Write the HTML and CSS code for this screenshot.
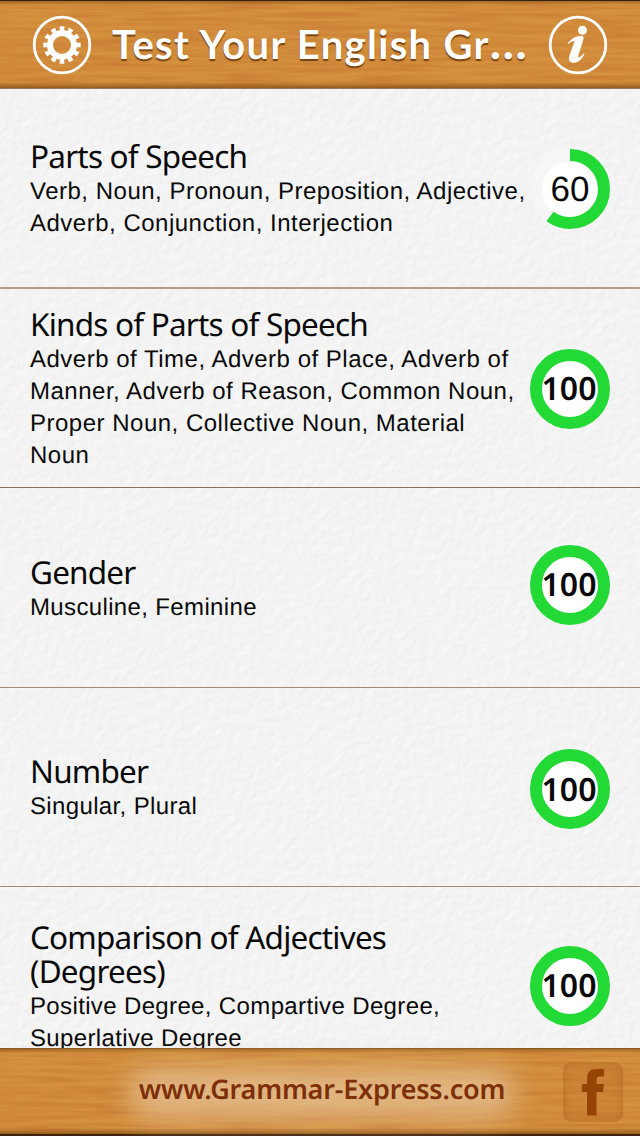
FILE: index.html
```html
<!DOCTYPE html>
<html lang="en">
<head>
    <meta charset="UTF-8">
    <meta name="viewport" content="width=device-width, initial-scale=1.0">
    <title>Test Your English Grammar</title>
    <link rel="stylesheet" href="styles.css">
</head>
<body>
    <header class="bar top-bar">
        <svg class="round-icon" viewBox="0 0 60 60">
            <circle cx="30" cy="30" r="27.8" fill="none" stroke="#fff" stroke-width="2.8"/>
            <circle cx="30" cy="30" r="12" fill="none" stroke="#fff" stroke-width="6"/>
            <!-- twelve teeth -->
            <circle cx="30" cy="30" r="16.3" fill="none" stroke="#fff" stroke-width="4.8" pathLength="120" stroke-dasharray="5.4 4.6" stroke-dashoffset="2.7"/>
        </svg>
        <h1>Test Your English Gr<span class="dots">…</span></h1>
        <svg class="round-icon" viewBox="0 0 60 60">
            <circle cx="30" cy="30" r="27.8" fill="none" stroke="#fff" stroke-width="2.8"/>
            <circle cx="34.5" cy="15.2" r="4.5" fill="#fff"/>
            <path d="M20 28.5C23 24 29 20.5 34.5 21.5C36 22 35 24.5 34.3 27L29.8 41C29.3 43.5 31.5 43.5 36 38.5C34.5 44 29 48.5 24 47.3C20.5 46.3 21 43 22 40L26.5 27.5C27.5 24.5 24 25.5 20 28.5Z" fill="#fff" stroke="#fff" stroke-width=".7"/>
        </svg>
    </header>

    <main class="topics">
        <section class="topic first">
            <div class="text">
                <h2>Parts of Speech</h2>
                <p>Verb, Noun, Pronoun, Preposition, Adjective,<br>Adverb, Conjunction, Interjection</p>
            </div>
            <div class="score partial">
                <svg viewBox="0 0 80 80">
                    <circle class="track" cx="40" cy="40" r="34"/>
                    <circle class="ring" cx="40" cy="40" r="34" pathLength="100" stroke-dasharray="60 40"/>
                </svg>
                <span>60</span>
            </div>
        </section>
        <section class="topic">
            <div class="text">
                <h2>Kinds of Parts of Speech</h2>
                <p>Adverb of Time, Adverb of Place, Adverb of<br>Manner, Adverb of Reason, Common Noun,<br>Proper Noun, Collective Noun, Material<br>Noun</p>
            </div>
            <div class="score">
                <svg viewBox="0 0 80 80"><circle class="ring" cx="40" cy="40" r="34"/></svg>
                <span>100</span>
            </div>
        </section>
        <section class="topic short">
            <div class="text">
                <h2>Gender</h2>
                <p>Musculine, Feminine</p>
            </div>
            <div class="score raised">
                <svg viewBox="0 0 80 80"><circle class="ring" cx="40" cy="40" r="34"/></svg>
                <span>100</span>
            </div>
        </section>
        <section class="topic short">
            <div class="text">
                <h2>Number</h2>
                <p>Singular, Plural</p>
            </div>
            <div class="score lowered">
                <svg viewBox="0 0 80 80"><circle class="ring" cx="40" cy="40" r="34"/></svg>
                <span>100</span>
            </div>
        </section>
        <section class="topic last">
            <div class="text">
                <h2>Comparison of Adjectives<br>(Degrees)</h2>
                <p>Positive Degree, Compartive Degree,<br>Superlative Degree</p>
            </div>
            <div class="score">
                <svg viewBox="0 0 80 80"><circle class="ring" cx="40" cy="40" r="34"/></svg>
                <span>100</span>
            </div>
        </section>
    </main>

    <footer class="bar bottom-bar">
        <div class="site">www.Grammar-Express.com</div>
        <div class="facebook">
            <svg viewBox="0 0 60 60">
                <path d="M24 53.5V30H19V22H24V18C24 10 27 7 34 7H41V14.5H37Q33.5 14.5 33.5 18V22H41L40 30H33.5V53.5Z" fill="#964404"/>
            </svg>
        </div>
    </footer>
</body>
</html>
```
FILE: styles.css
```css
* {
    box-sizing: border-box;
}

body {
    margin: 0;
    width: 640px;
    height: 1136px;
    display: flex;
    flex-direction: column;
    overflow: hidden;
    font-family: "Liberation Sans", Arial, sans-serif;
    color: #0a0a0a;
    text-rendering: geometricPrecision;
}

h1, h2, p {
    margin: 0;
}

/* wood grain */
.bar {
    flex: none;
    display: flex;
    align-items: center;
    background:
        linear-gradient(rgba(80, 40, 0, .35), transparent 4px, transparent calc(100% - 6px), rgba(90, 45, 0, .5)),
        url("data:image/svg+xml,%3Csvg xmlns='http://www.w3.org/2000/svg' width='640' height='88'%3E%3Cfilter id='w' x='0' y='0' width='100%25' height='100%25' color-interpolation-filters='sRGB'%3E%3CfeTurbulence type='fractalNoise' baseFrequency='.014 .24' numOctaves='3' seed='4'/%3E%3CfeColorMatrix values='0 0 0 0 .76 0 0 0 0 .44 0 0 0 0 .18 1.1 0 0 0 -.35'/%3E%3C/filter%3E%3Crect width='640' height='88' filter='url(%23w)'/%3E%3C/svg%3E") #d4913e;
}

.top-bar {
    height: 89px;
    padding: 0 32px;
    justify-content: space-between;
    border-top: 1px solid #35210f;
    border-bottom: 1px solid #8f7c68;
}

.round-icon {
    width: 60px;
    height: 60px;
    flex: none;
}

.top-bar h1 {
    font-family: Lato, sans-serif;
    font-size: 40px;
    font-weight: 700;
    line-height: 60px;
    height: 62px;
    letter-spacing: 1.3px;
    white-space: nowrap;
    color: #fff;
    text-shadow: 0 2px 1px rgba(90, 40, 0, .75);
}

.dots {
    font-size: 48px;
    line-height: 1;
}

/* paper */
.topics {
    height: 959px;
    overflow: hidden;
    background: url("data:image/svg+xml,%3Csvg xmlns='http://www.w3.org/2000/svg' width='640' height='960'%3E%3Cfilter id='p' x='0' y='0' width='100%25' height='100%25' color-interpolation-filters='sRGB'%3E%3CfeTurbulence type='fractalNoise' baseFrequency='.13' numOctaves='2' seed='7'/%3E%3CfeDiffuseLighting surfaceScale='.16' diffuseConstant='1.053' lighting-color='white'%3E%3CfeDistantLight azimuth='225' elevation='65'/%3E%3C/feDiffuseLighting%3E%3C/filter%3E%3Crect width='640' height='960' filter='url(%23p)'/%3E%3C/svg%3E") #f5f5f5;
}

.topic {
    height: 199px;
    padding: 1px 30px 0;
    display: flex;
    align-items: center;
    justify-content: space-between;
    border-bottom: 1px solid #8e6f5e;
}

.topic.first {
    height: 200px;
    border-bottom: 2px solid #b59a8c;
}

.topic.short {
    height: 199.5px;
    padding-top: 3px;
    border-bottom-color: #a58a72;
}

.topic.last {
    border-bottom: 0;
}

.text {
    width: 500px;
    padding-top: 2px;
    white-space: nowrap;
}

.topic h2 {
    padding-bottom: 2px;
    font-family: "Noto Sans", sans-serif;
    font-size: 31.5px;
    font-weight: 400;
    line-height: 34px;
    letter-spacing: -.8px;
}

.topic p {
    font-size: 24px;
    line-height: 32px;
    letter-spacing: .5px;
}

.short p,
.last p {
    letter-spacing: .36px;
}

.score {
    flex: none;
    position: relative;
    width: 80px;
    height: 80px;
    display: flex;
    align-items: center;
    justify-content: center;
    border-radius: 50%;
}

.score.raised {
    margin-bottom: 8px;
}

.score.lowered {
    margin-top: 2px;
}

.last .score {
    margin-bottom: 3px;
}

.score svg {
    position: absolute;
    width: 80px;
    height: 80px;
    transform: rotate(-90deg);
}

.ring,
.track {
    fill: #fff;
    stroke: #22d935;
    stroke-width: 12;
}

.track {
    stroke: #f6f6f6;
}

.partial .ring {
    fill: none;
}

.score span {
    position: relative;
    padding: 1px 2px 0 0;
    font-family: "Noto Sans", sans-serif;
    font-size: 32px;
    font-weight: 600;
    line-height: 40px;
}

.score.partial span {
    font-family: "Liberation Sans", Arial, sans-serif;
    font-size: 35px;
    font-weight: 400;
    padding: 2px 0 0;
}

.bottom-bar {
    height: 88px;
    padding: 0 17px 0 124px;
    justify-content: space-between;
    border-top: 1px solid #8a5a20;
    border-bottom: 2px solid #3c240c;
}

.site {
    position: relative;
    width: 396px;
    height: 60px;
    text-align: center;
    font-family: "Noto Sans", sans-serif;
    font-size: 27px;
    font-weight: 600;
    line-height: 54px;
    letter-spacing: -.2px;
    white-space: nowrap;
    color: #7e2f08;
    z-index: 0;
}

/* soft light behind the address */
.site::before {
    content: "";
    position: absolute;
    inset: 6px 6px 4px;
    z-index: -1;
    border-radius: 20px;
    background: rgba(228, 190, 145, .85);
    filter: blur(14px);
}

.facebook {
    width: 60px;
    height: 60px;
    border-radius: 9px;
    background: rgba(185, 105, 35, .2);
    box-shadow: inset 0 0 8px rgba(150, 75, 15, .4);
}
```
